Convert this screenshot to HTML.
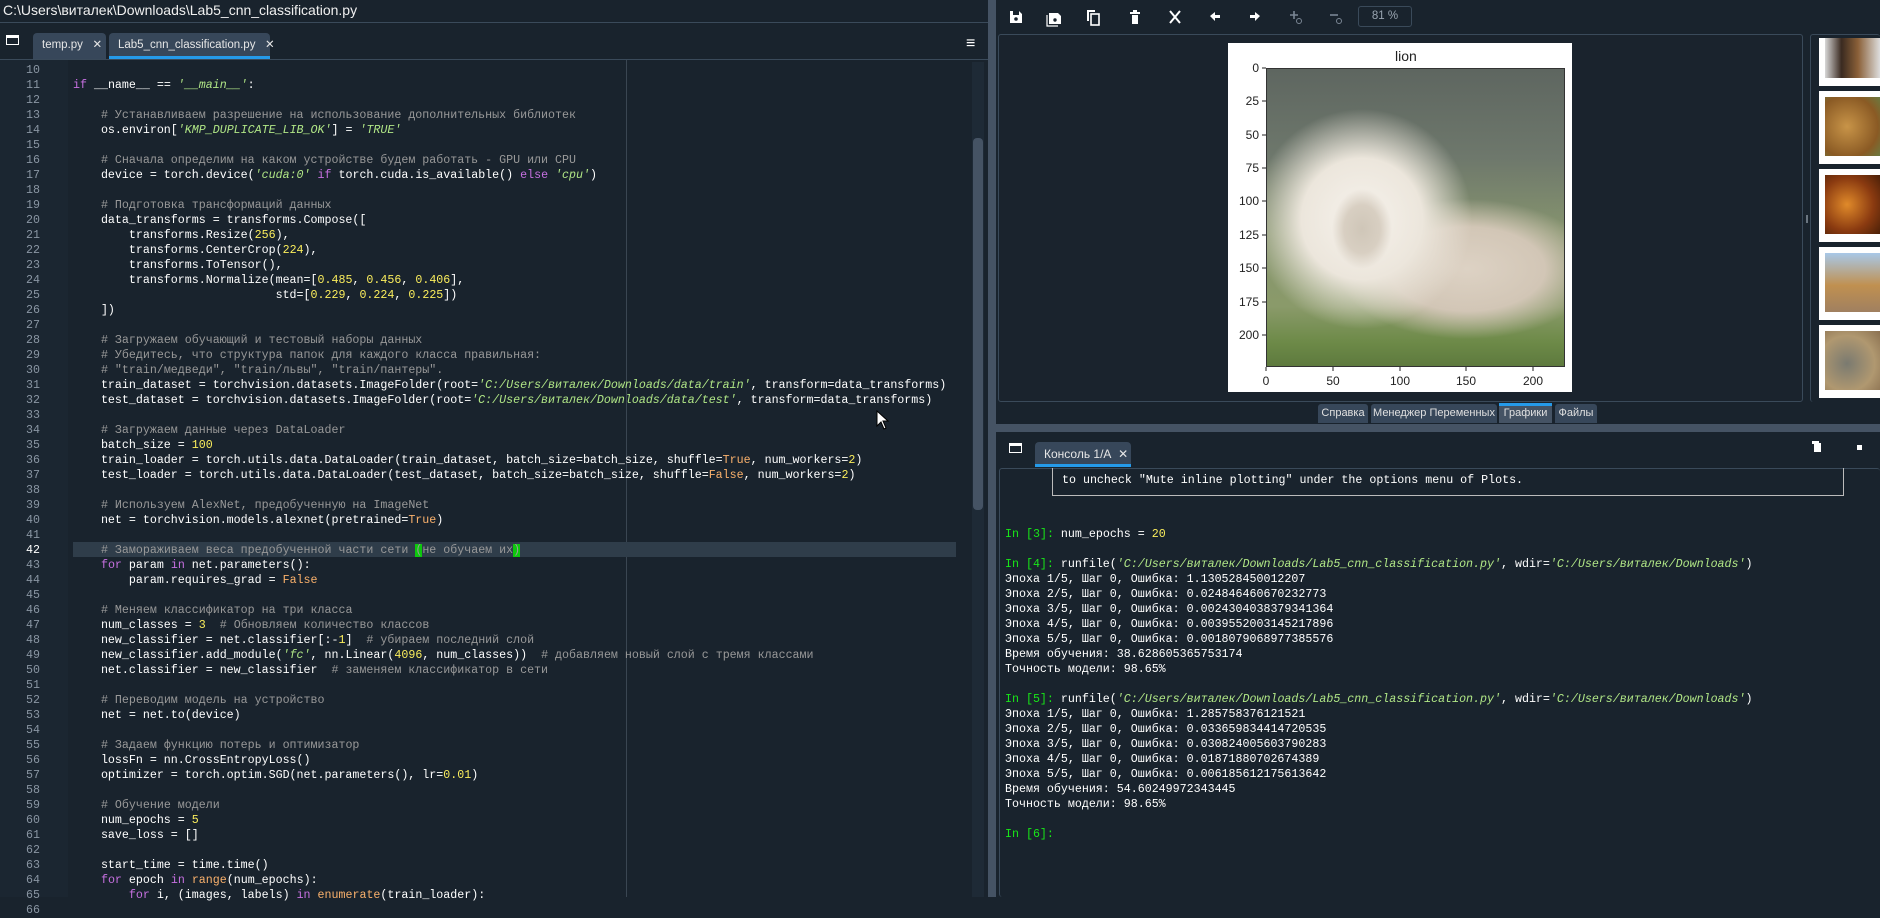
<!DOCTYPE html>
<html><head><meta charset="utf-8">
<style>
*{margin:0;padding:0;box-sizing:border-box}
body{width:1880px;height:897px;background:#19232d;overflow:hidden;position:relative;font-family:"Liberation Sans",sans-serif;color:#fff}
.a{position:absolute}
pre{font-family:"Liberation Mono","DejaVu Sans Mono",monospace;font-size:11.65px;line-height:15px;color:#fff;white-space:pre}
.k{color:#c670e0}.s{color:#b0e686;font-style:italic}.n{color:#faed5c}.c{color:#999}.b{color:#fab16c}.g{color:#18e618}
.tab{position:absolute;background:#37475a;border-radius:4px 4px 0 0;font-size:11.5px;color:#e6e6e6;padding-left:9px;line-height:25px;white-space:nowrap}
.bt{position:absolute;top:404px;height:19px;background:#37475a;border-radius:3px 3px 0 0;font-size:11px;color:#e0e0e0;line-height:19px;text-align:center;white-space:nowrap;overflow:hidden}
.th{position:absolute;left:1819px;width:61px;background:#fff}
.th i{position:absolute;left:6px;top:6px;right:0;bottom:8px}
</style></head><body>
<!-- title -->
<div class="a" style="left:3px;top:2px;font-size:14px;color:#f0f0f0">C:\Users\виталек\Downloads\Lab5_cnn_classification.py</div>
<div class="a" style="left:0;top:22px;width:988px;height:1px;background:#3a4a5a"></div>
<!-- editor tabs -->
<div class="a" style="left:6px;top:35px;width:13px;height:10px;border:1.5px solid #fff;border-top-width:3px"></div>
<div class="tab" style="left:33px;top:33px;width:73px;height:26px">temp.py&nbsp;&nbsp;&nbsp;✕</div>
<div class="tab" style="left:109px;top:33px;width:161px;height:26px">Lab5_cnn_classification.py&nbsp;&nbsp;&nbsp;✕</div>
<div class="a" style="left:109px;top:56px;width:161px;height:3px;background:#259ae9"></div>
<div class="a" style="left:966px;top:35px;font-size:16px;color:#fff">≡</div>
<div class="a" style="left:0;top:59px;width:988px;height:1px;background:#3a4a5a"></div>
<!-- gutter -->
<div class="a" style="left:0;top:60px;width:68px;height:837px;background:#1b2631"></div>
<div class="a" style="left:626px;top:60px;width:1px;height:837px;background:#3a4652"></div>
<div class="a" style="left:73px;top:542px;width:883px;height:15px;background:#2f3d4a"></div>
<div class="a" style="left:972px;top:62px;width:12px;height:835px;background:#1e2a36"></div>
<div class="a" style="left:973px;top:138px;width:10px;height:372px;background:#455364;border-radius:4px"></div>
<pre class="a" style="left:6px;top:63px;color:#8a96a3;text-align:right;width:34px">10
11
12
13
14
15
16
17
18
19
20
21
22
23
24
25
26
27
28
29
30
31
32
33
34
35
36
37
38
39
40
41
<span style="color:#fff">42</span>
43
44
45
46
47
48
49
50
51
52
53
54
55
56
57
58
59
60
61
62
63
64
65
66</pre>
<pre class="a" style="left:73px;top:63px">

<span class="k">if</span> __name__ == <span class="s">'__main__'</span>:

    <span class="c"># Устанавливаем разрешение на использование дополнительных библиотек</span>
    os.environ[<span class="s">'KMP_DUPLICATE_LIB_OK'</span>] = <span class="s">'TRUE'</span>

    <span class="c"># Сначала определим на каком устройстве будем работать - GPU или CPU</span>
    device = torch.device(<span class="s">'cuda:0'</span> <span class="k">if</span> torch.cuda.is_available() <span class="k">else</span> <span class="s">'cpu'</span>)

    <span class="c"># Подготовка трансформаций данных</span>
    data_transforms = transforms.Compose([
        transforms.Resize(<span class="n">256</span>),
        transforms.CenterCrop(<span class="n">224</span>),
        transforms.ToTensor(),
        transforms.Normalize(mean=[<span class="n">0.485</span>, <span class="n">0.456</span>, <span class="n">0.406</span>],
                             std=[<span class="n">0.229</span>, <span class="n">0.224</span>, <span class="n">0.225</span>])
    ])

    <span class="c"># Загружаем обучающий и тестовый наборы данных</span>
    <span class="c"># Убедитесь, что структура папок для каждого класса правильная:</span>
    <span class="c"># "train/медведи", "train/львы", "train/пантеры".</span>
    train_dataset = torchvision.datasets.ImageFolder(root=<span class="s">'C:/Users/виталек/Downloads/data/train'</span>, transform=data_transforms)
    test_dataset = torchvision.datasets.ImageFolder(root=<span class="s">'C:/Users/виталек/Downloads/data/test'</span>, transform=data_transforms)

    <span class="c"># Загружаем данные через DataLoader</span>
    batch_size = <span class="n">100</span>
    train_loader = torch.utils.data.DataLoader(train_dataset, batch_size=batch_size, shuffle=<span class="b">True</span>, num_workers=<span class="n">2</span>)
    test_loader = torch.utils.data.DataLoader(test_dataset, batch_size=batch_size, shuffle=<span class="b">False</span>, num_workers=<span class="n">2</span>)

    <span class="c"># Используем AlexNet, предобученную на ImageNet</span>
    net = torchvision.models.alexnet(pretrained=<span class="b">True</span>)

    <span class="c"># Замораживаем веса предобученной части сети <span style="background:#0cc80c">(</span>не обучаем их<span style="background:#0cc80c">)</span></span>
    <span class="k">for</span> param <span class="k">in</span> net.parameters():
        param.requires_grad = <span class="b">False</span>

    <span class="c"># Меняем классификатор на три класса</span>
    num_classes = <span class="n">3</span>  <span class="c"># Обновляем количество классов</span>
    new_classifier = net.classifier[:-<span class="n">1</span>]  <span class="c"># убираем последний слой</span>
    new_classifier.add_module(<span class="s">'fc'</span>, nn.Linear(<span class="n">4096</span>, num_classes))  <span class="c"># добавляем новый слой с тремя классами</span>
    net.classifier = new_classifier  <span class="c"># заменяем классификатор в сети</span>

    <span class="c"># Переводим модель на устройство</span>
    net = net.to(device)

    <span class="c"># Задаем функцию потерь и оптимизатор</span>
    lossFn = nn.CrossEntropyLoss()
    optimizer = torch.optim.SGD(net.parameters(), lr=<span class="n">0.01</span>)

    <span class="c"># Обучение модели</span>
    num_epochs = <span class="n">5</span>
    save_loss = []

    start_time = time.time()
    <span class="k">for</span> epoch <span class="k">in</span> <span class="b">range</span>(num_epochs):
        <span class="k">for</span> i, (images, labels) <span class="k">in</span> <span class="b">enumerate</span>(train_loader):</pre>
<!-- mouse cursor -->
<svg class="a" style="left:876px;top:410px" width="14" height="20" viewBox="0 0 14 20"><path d="M1 1 L1 16 L5 12 L8 19 L10 18 L7 11 L12 11 Z" fill="#fff" stroke="#000" stroke-width="1"/></svg>
<!-- splitter -->
<div class="a" style="left:988px;top:0;width:8px;height:897px;background:#455364"></div>
<!-- plots toolbar -->
<svg class="a" style="left:1005px;top:6px" width="420" height="22" viewBox="0 0 420 22" fill="#fff">
<path d="M5 5h9l3 3v9H5z M8 5v4h6V5" /><circle cx="11" cy="13" r="1.8" fill="#19232d"/>
<path d="M44 7h9l3 3v8H44z"/><path d="M42 9v11h11" fill="none" stroke="#fff" stroke-width="1.2"/><circle cx="50" cy="14" r="1.7" fill="#19232d"/>
<path d="M82 4h8v2h-6v9h-2z"/><rect x="86" y="8" width="8" height="11" fill="none" stroke="#fff" stroke-width="1.6"/>
<path d="M125 6h10v2h-10z M127 9h6v9h-6z M128 4h4v2h-4z"/>
<path d="M165 5l10 12M175 5l-10 12" stroke="#fff" stroke-width="2"/>
<path d="M205 10l5-4v3h5v3h-5v3z"/>
<path d="M255 10l-5-4v3h-5v3h5v3z"/>
<g fill="#7a8694" stroke="#7a8694"><path d="M289 5v8M285 9h8" stroke-width="1.6"/><circle cx="294" cy="15" r="2.5" fill="none"/></g>
<g fill="#7a8694" stroke="#7a8694"><path d="M325 9h8" stroke-width="1.6"/><circle cx="334" cy="15" r="2.5" fill="none"/></g>
</svg>
<div class="a" style="left:1358px;top:6px;width:54px;height:21px;border:1px solid #3a4a5a;border-radius:3px;font-size:11.5px;color:#9aa5b1;line-height:19px;text-align:center">81 %</div>
<!-- plot panel -->
<div class="a" style="left:998px;top:34px;width:805px;height:368px;border:1px solid #3a4a5a;border-radius:3px;background:#1a232d"></div>
<div class="a" style="left:1810px;top:34px;width:70px;height:368px;border-left:1px solid #3a4a5a;border-top:1px solid #3a4a5a;border-radius:3px"></div>
<div class="a" style="left:1806px;top:215px;width:2px;height:8px;background:#6a7580"></div>
<!-- figure -->
<div class="a" style="left:1228px;top:43px;width:344px;height:349px;background:#fff"></div>
<div class="a" style="left:1395px;top:48px;font-size:14px;color:#222">lion</div>
<div class="a" style="left:1266px;top:68px;width:299px;height:299px;border:1px solid #333;overflow:hidden;background:
radial-gradient(ellipse 30px 40px at 95px 160px,#cfc6b8 0%,#d8cfc2 60%,rgba(220,210,195,0) 100%),
radial-gradient(ellipse 110px 110px at 95px 150px,#f6f2ec 0%,#ece6dc 55%,rgba(230,222,210,0) 100%),
radial-gradient(ellipse 130px 70px at 200px 200px,#ddd2c4 0%,#d2c6b6 60%,rgba(200,190,170,0) 100%),
linear-gradient(180deg,#5e6660 0%,#6e786c 30%,#86946e 55%,#8a9a6a 80%,#6d8a48 92%,#5e7a3e 100%)"></div>
<svg class="a" style="left:1228px;top:43px" width="344" height="349">
<g font-family="Liberation Sans,DejaVu Sans,sans-serif" font-size="12" fill="#222" text-anchor="end">
<text x="31" y="29">0</text><text x="31" y="62">25</text><text x="31" y="96">50</text><text x="31" y="129">75</text><text x="31" y="162">100</text><text x="31" y="196">125</text><text x="31" y="229">150</text><text x="31" y="263">175</text><text x="31" y="296">200</text>
</g>
<g stroke="#222"><path d="M34 25h4M34 58h4M34 92h4M34 125h4M34 158h4M34 192h4M34 225h4M34 259h4M34 292h4"/>
<path d="M38 324v4M105 324v4M172 324v4M238 324v4M305 324v4"/></g>
<g font-family="Liberation Sans,DejaVu Sans,sans-serif" font-size="12" fill="#222" text-anchor="middle">
<text x="38" y="342">0</text><text x="105" y="342">50</text><text x="172" y="342">100</text><text x="238" y="342">150</text><text x="305" y="342">200</text></g>
</svg>
<!-- thumbnails -->
<div class="th" style="top:38px;height:48px"><i style="top:0;background:linear-gradient(90deg,#d8d8d8,#3a2a20 30%,#8a6038 60%,#ddd)"></i></div>
<div class="th" style="top:91px;height:73px"><i style="background:radial-gradient(circle at 40% 50%,#c89448,#8a5a24 70%,#6a7a40)"></i></div>
<div class="th" style="top:169px;height:73px"><i style="background:radial-gradient(circle at 40% 50%,#e08a2a,#8a3a10 60%,#4a2008)"></i></div>
<div class="th" style="top:247px;height:73px"><i style="background:linear-gradient(180deg,#a8c8e8,#c09050 55%,#a08060)"></i></div>
<div class="th" style="top:325px;height:73px"><i style="background:radial-gradient(circle at 40% 55%,#7a7a70,#b09870 60%,#8a7050)"></i></div>
<!-- bottom tabs -->
<div class="bt" style="left:1318px;width:50px">Справка</div>
<div class="bt" style="left:1371px;width:126px">Менеджер Переменных</div>
<div class="bt" style="left:1499px;width:53px;background:#455364">Графики</div>
<div class="a" style="left:1499px;top:403px;width:53px;height:3px;background:#259ae9"></div>
<div class="bt" style="left:1555px;width:42px">Файлы</div>
<!-- horizontal splitter -->
<div class="a" style="left:996px;top:424px;width:884px;height:8px;background:#455364"></div>
<!-- console -->
<div class="a" style="left:1009px;top:443px;width:13px;height:10px;border:1.5px solid #fff;border-top-width:3px"></div>
<div class="tab" style="left:1035px;top:442px;width:96px;height:25px;font-size:12px;line-height:24px">Консоль 1/A&nbsp;&nbsp;✕</div>
<div class="a" style="left:1035px;top:464px;width:96px;height:3px;background:#259ae9"></div>
<svg class="a" style="left:1811px;top:440px" width="60" height="16"><rect x="3" y="3" width="7" height="9" fill="#fff"/><rect x="1" y="1" width="7" height="3" fill="#fff"/><rect x="46" y="5" width="5" height="5" fill="#fff"/></svg>
<div class="a" style="left:999px;top:468px;width:881px;height:429px;border:1px solid #3a4a5a;border-radius:3px;border-right:none;border-bottom:none"></div>
<div class="a" style="left:1052px;top:468px;width:792px;height:28px;border:1px solid #bbb;border-top:none"></div>
<pre class="a" style="left:1062px;top:473px">to uncheck "Mute inline plotting" under the options menu of Plots.</pre>
<pre class="a" style="left:1005px;top:527px"><span class="g">In [</span><span class="g">3</span><span class="g">]:</span> num_epochs = <span class="n">20</span>

<span class="g">In [4]:</span> runfile(<span class="s">'C:/Users/виталек/Downloads/Lab5_cnn_classification.py'</span>, wdir=<span class="s">'C:/Users/виталек/Downloads'</span>)
Эпоха 1/5, Шаг 0, Ошибка: 1.130528450012207
Эпоха 2/5, Шаг 0, Ошибка: 0.024846460670232773
Эпоха 3/5, Шаг 0, Ошибка: 0.0024304038379341364
Эпоха 4/5, Шаг 0, Ошибка: 0.0039552003145217896
Эпоха 5/5, Шаг 0, Ошибка: 0.0018079068977385576
Время обучения: 38.628605365753174
Точность модели: 98.65%

<span class="g">In [5]:</span> runfile(<span class="s">'C:/Users/виталек/Downloads/Lab5_cnn_classification.py'</span>, wdir=<span class="s">'C:/Users/виталек/Downloads'</span>)
Эпоха 1/5, Шаг 0, Ошибка: 1.285758376121521
Эпоха 2/5, Шаг 0, Ошибка: 0.033659834414720535
Эпоха 3/5, Шаг 0, Ошибка: 0.030824005603790283
Эпоха 4/5, Шаг 0, Ошибка: 0.01871880702674389
Эпоха 5/5, Шаг 0, Ошибка: 0.006185612175613642
Время обучения: 54.60249972343445
Точность модели: 98.65%

<span class="g">In [6]:</span></pre>
</body></html>
